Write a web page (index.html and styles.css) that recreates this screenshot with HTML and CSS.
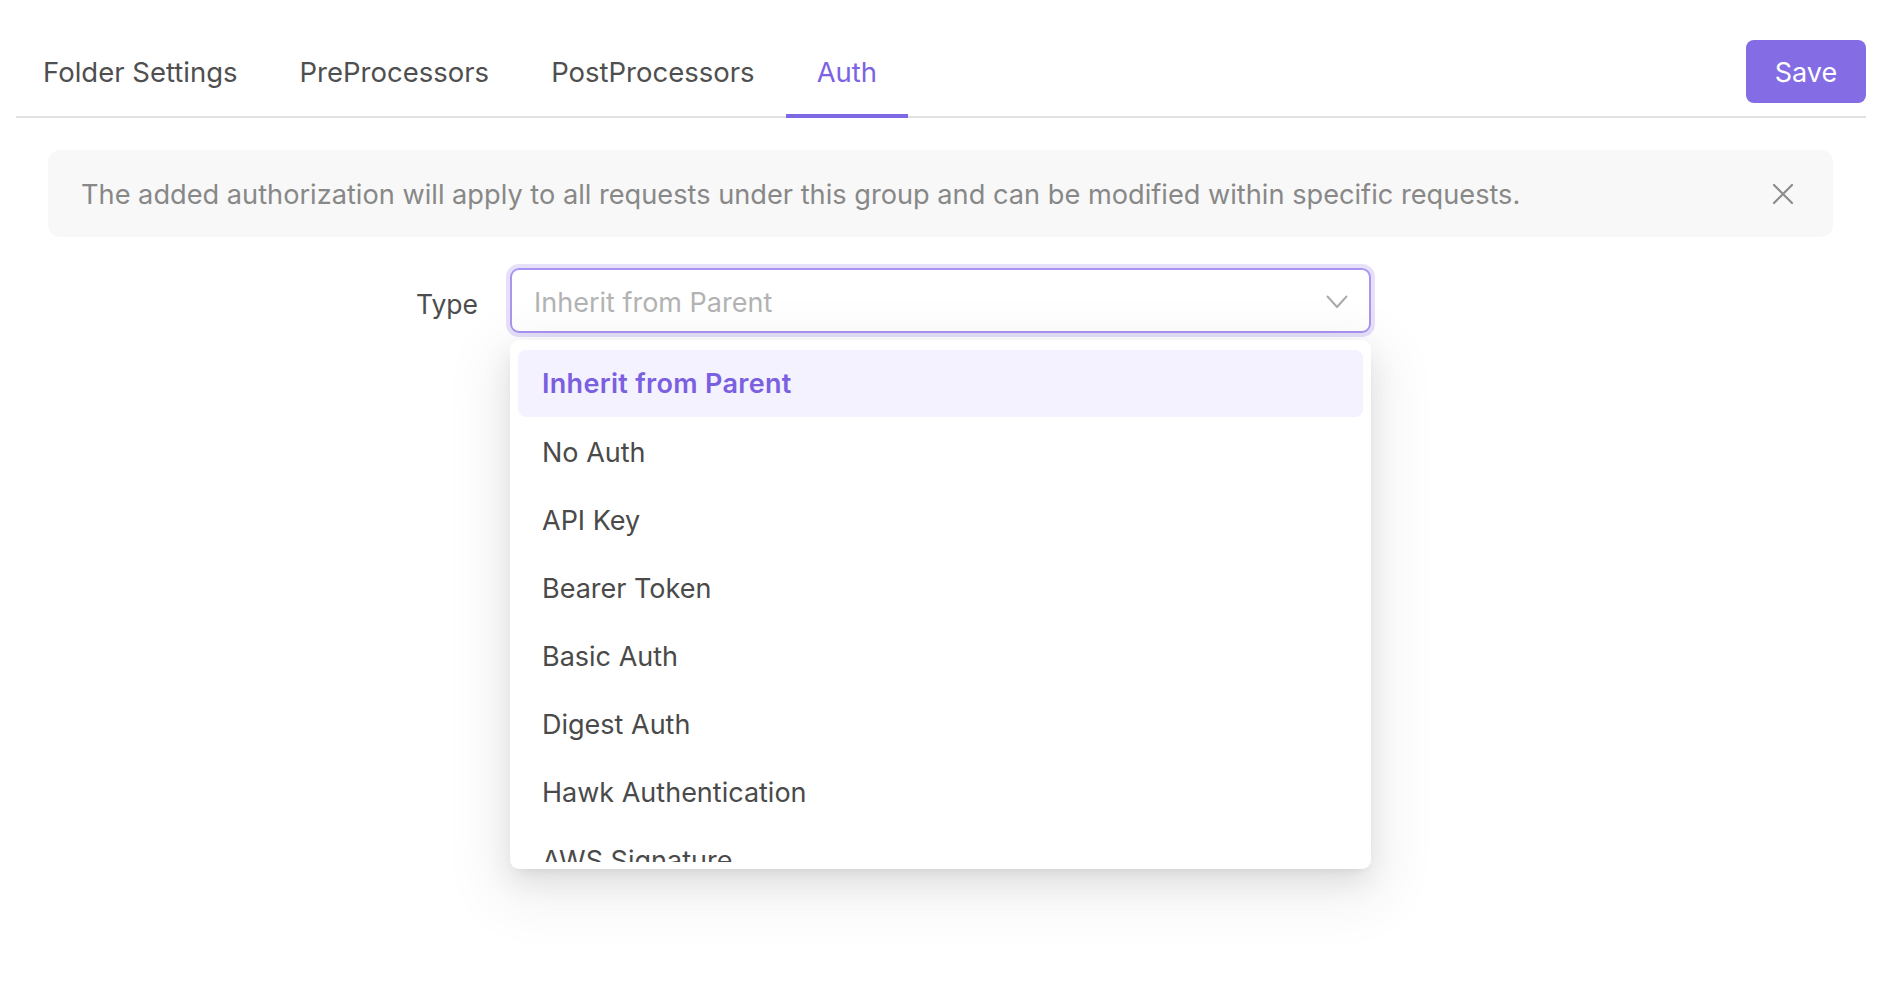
FILE: index.html
```html
<!DOCTYPE html>
<html>
<head>
<meta charset="utf-8">
<link rel="stylesheet" href="styles.css">
</head>
<body>
<div class="page">
  <div class="header">
    <div class="tabs">
      <div class="tab first">Folder Settings</div>
      <div class="tab">PreProcessors</div>
      <div class="tab">PostProcessors</div>
      <div class="tab active">Auth</div>
    </div>
    <button class="save">Save</button>
  </div>
  <div class="alert">
    <span class="alert-text">The added authorization will apply to all requests under this group and can be modified within specific requests.</span>
    <svg class="close" width="22" height="22" viewBox="0 0 22 22"><path d="M2 2 L20 20 M20 2 L2 20" stroke="#8c8c8c" stroke-width="2.2" stroke-linecap="round" fill="none"/></svg>
  </div>
  <div class="form-row">
    <div class="label">Type</div>
    <div class="select-wrap">
      <div class="select">
        <span class="placeholder">Inherit from Parent</span>
        <svg class="chev" width="22" height="14" viewBox="0 0 22 14"><path d="M1.5 1.5 L11 12 L20.5 1.5" stroke="#aaaaaa" stroke-width="2" fill="none" stroke-linecap="round" stroke-linejoin="round"/></svg>
      </div>
      <div class="dropdown">
        <div class="list">
          <div class="item selected">Inherit from Parent</div>
          <div class="item">No Auth</div>
          <div class="item">API Key</div>
          <div class="item">Bearer Token</div>
          <div class="item">Basic Auth</div>
          <div class="item">Digest Auth</div>
          <div class="item">Hawk Authentication</div>
          <div class="item">AWS Signature</div>
        </div>
      </div>
    </div>
  </div>
</div>
</body>
</html>
```
FILE: styles.css
```css
* { box-sizing: border-box; }
html, body { margin: 0; padding: 0; background: #fff; }
body {
  font-family: Inter, "Noto Sans", "Liberation Sans", sans-serif;
  color: #4a4a4a;
  width: 1886px;
  height: 994px;
  overflow: hidden;
}
.page { padding: 0 20px 0 16px; }
.header {
  display: flex;
  justify-content: space-between;
  height: 118px;
  border-bottom: 2px solid #e2e2e2;
}
.tabs { display: flex; height: 116px; }
.tab {
  position: relative;
  height: 116px;
  padding: 28px 31px 0;
  display: flex;
  align-items: center;
  font-size: 27.5px;
  color: #4f4f4f;
}
.tab.first { padding-left: 27px; }
.tab.active { color: #7b63e2; }
.tab.active::after {
  content: "";
  position: absolute;
  left: 0; right: 0; bottom: -2px;
  height: 4px;
  background: #7f68e3;
}
.save {
  margin-top: 40px;
  height: 63px;
  width: 120px;
  border: none;
  border-radius: 8px;
  background: #836ce4;
  color: #fff;
  font-family: inherit;
  font-size: 27px;
  padding-top: 2px;
}
.alert {
  margin: 32px 33px 0 32px;
  height: 87px;
  background: #f8f8f8;
  border-radius: 12px;
  padding: 0 39px 0 33px;
  display: flex;
  align-items: center;
  justify-content: space-between;
}
.alert-text { font-size: 27.2px; color: #888; padding-top: 1px; }
.form-row {
  display: flex;
  align-items: center;
  margin-top: 31px;
  gap: 32px;
}
.label {
  width: 462px;
  text-align: right;
  font-size: 26.5px;
  color: #4d4d4d;
  padding-top: 7px;
}
.select-wrap { position: relative; width: 861px; }
.select {
  height: 65px;
  border: 2px solid #a994f2;
  border-radius: 9px;
  box-shadow: 0 0 0 4px #e6e0fb;
  display: flex;
  align-items: center;
  justify-content: space-between;
  padding: 0 21px 0 22px;
}
.placeholder { font-size: 27px; color: #b3b3b3; padding-top: 3px; }
.chev { margin-top: 2px; }
.dropdown {
  position: absolute;
  top: 72px;
  left: 0;
  width: 861px;
  height: 529px;
  background: #fff;
  border-radius: 9px;
  padding: 10px 8px 7px;
  box-shadow: 0 12px 30px 0 rgba(0,0,0,.09), 0 6px 12px -8px rgba(0,0,0,.14), 0 18px 56px 18px rgba(0,0,0,.055);
}
.list { height: 512px; overflow: hidden; }
.item {
  height: 68px;
  display: flex;
  align-items: center;
  padding-left: 24px;
  font-size: 27px;
  color: #4a4a4a;
  border-radius: 8px;
}
.item.selected {
  height: 67px;
  margin-bottom: 1px;
  background: #f4f2fe;
  color: #7a60e1;
  font-weight: 600;
  letter-spacing: 0.3px;
}
```
